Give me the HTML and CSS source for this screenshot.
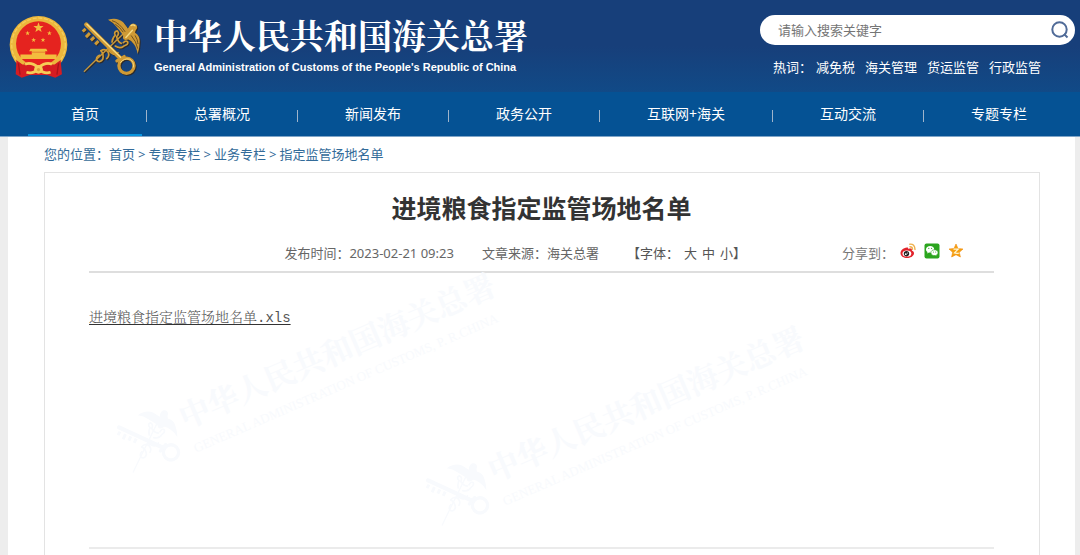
FILE: index.html
```html
<!DOCTYPE html>
<html lang="zh-CN">
<head>
<meta charset="utf-8">
<meta name="viewport" content="width=device-width, initial-scale=1">
<title>进境粮食指定监管场地名单</title>
<link rel="stylesheet" href="styles.css">
</head>
<body>
<svg class="defs" aria-hidden="true">
  <defs>
    <symbol id="keys" viewBox="240 50 182 182">
      <g fill="none" stroke="currentColor" stroke-linecap="round" stroke-linejoin="round">
        <path d="M250 215L290 176L386 84" stroke-width="4"/>
        <path d="M296 166q-12 6-8 16q10 8 18-4q4-16-6-26q14-8 22 4q6 12-4 20M324 150q12 20 28 8M344 138q14 10 26 0q14-4 12-12q-6-6-14 2M334 126q2-14 10-20q-6-12 6-14q8 8-2 18q4 16 14 20" stroke-width="5"/>
        <path d="M256 73L360 176" stroke-width="13"/>
        <path d="M254 86l-9 8M267 99l-12 12M280 111l-10 10M293 123l-10 10" stroke-width="9" stroke-linecap="butt"/>
        <ellipse cx="378" cy="198" rx="23" ry="23" stroke-width="10"/>
        <path d="M349 183l22-13" stroke-width="10"/>
      </g>
      <g fill="currentColor">
        <path d="M322 58q28-8 46 8q10 12 16 22q0-14 14-18q14 2 12 14q-6 8-6 14q16 10 14 28q0 18-6 36q-4-20-12-30q-8-12-16-14q-20 6-16-12q-8-12-20-26q-10-14-26-22z"/>
      </g>
      <g class="shine" fill="none" stroke-linecap="round">
        <path d="M258 72L360 172" stroke-width="4"/>
        <path d="M360 188q10-14 28-10q14 8 11 24" stroke-width="3"/>
        <path d="M392 76q6-5 12 1M376 112L396 90" stroke-width="4"/>
      </g>
      <path class="feather" d="M334 61q22 6 40 34M344 72q14 8 24 24M392 106q16 18 20 40M404 106q8 12 9 26" fill="none" stroke-width="3"/>
    </symbol>
    <symbol id="star" viewBox="-10 -10 20 20"><path d="M0-10L2.4-3.1 9.5-3.1 3.8 1.2 5.9 8.1 0 4 -5.9 8.1 -3.8 1.2 -9.5-3.1 -2.4-3.1z"/></symbol>
  </defs>
</svg>

<header class="site-header">
  <div class="brand-bar">
    <a class="brand" href="#">
      <svg class="emblem" viewBox="26 42 176 188" role="img" aria-label="国徽">
        <circle cx="114" cy="131" r="86" fill="#ecb73c"/>
        <circle cx="114" cy="131" r="80" fill="none" stroke="#f5cd5c" stroke-width="4" stroke-dasharray="12 5"/>
        <path d="M48 176l18 14h96l18-14 4 43-20 10-24-8H88l-24 8-18-10z" fill="#d51c22"/>
        <circle cx="114" cy="128" r="67" fill="#e5231f"/>
        <g fill="#f3bd3e">
          <use href="#star" x="98" y="64" width="32" height="32"/>
          <use href="#star" x="74" y="89" width="15" height="15"/><use href="#star" x="139" y="89" width="15" height="15"/>
          <use href="#star" x="92" y="109" width="15" height="15"/><use href="#star" x="120" y="109" width="15" height="15"/>
          <path d="M90 143h47l4 7h-7v10h34v13H60v-13h34v-10h-8z"/>
        </g>
        <path d="M92 153h44" stroke="#e2632a" stroke-width="2"/>
        <path d="M72 187q20-6 42 12q22-18 42 12M76 215q22 6 38-10q16 16 38 10" fill="none" stroke="#d51c22" stroke-width="3"/>
        <path d="M74 189q18-8 40 10q22-18 40-10M78 213q20 6 36-10q16 16 36 10" fill="none" stroke="#f6ce57" stroke-width="8"/>
        <circle cx="114" cy="204" r="13" fill="#f6ce57"/>
        <circle cx="114" cy="205" r="5" fill="#e0a23a"/>
        <path d="M54 186l5 34M174 186l-5 34" stroke="#a9131b" stroke-width="4"/>
      </svg>
      <svg class="keys" role="img" aria-label="关徽"><use href="#keys"/></svg>
      <span class="brand-text">
        <span class="brand-cn">中华人民共和国海关总署</span>
        <span class="brand-en">General Administration of Customs of the People's Republic of China</span>
      </span>
    </a>
    <div class="search-area">
      <form class="search">
        <input type="text" aria-label="搜索关键字" placeholder="请输入搜索关键字">
        <button type="button" aria-label="搜索">
          <svg viewBox="0 0 18 18"><circle cx="8.5" cy="8.5" r="7.2"/><path d="M13 13l3.5 3.5"/></svg>
        </button>
      </form>
      <div class="hot"><span class="hot-label">热词：</span><a href="#">减免税</a><a href="#">海关管理</a><a href="#">货运监管</a><a href="#">行政监管</a></div>
    </div>
  </div>
  <nav class="main-nav">
    <a class="active" href="#">首页</a><i></i><a href="#">总署概况</a><i></i><a href="#">新闻发布</a><i></i><a href="#">政务公开</a><i></i><a href="#">互联网+海关</a><i></i><a href="#">互动交流</a><i></i><a href="#">专题专栏</a>
  </nav>
</header>

<main class="page">
  <nav class="crumbs">
    <span class="crumb-label">您的位置：</span><a href="#">首页</a><span class="sep">&gt;</span><a href="#">专题专栏</a><span class="sep">&gt;</span><a href="#">业务专栏</a><span class="sep">&gt;</span><a href="#">指定监管场地名单</a>
  </nav>
  <article class="panel">
    <h1>进境粮食指定监管场地名单</h1>
    <div class="meta">
      <span>发布时间：2023-02-21 09:23</span>
      <span>文章来源：海关总署</span>
      <span class="sizes"><span>【字体：</span><button type="button">大</button><button type="button">中</button><button type="button">小</button><span class="close">】</span></span>
      <div class="share">
        <span class="share-label">分享到：</span>
        <a href="#" aria-label="微博"><svg viewBox="0 0 16 16">
          <path d="M7 4.500C3 5 .5 7.500 .5 10.300C.5 13 3.500 15 7 15s7-2 7-4.700c0-1.500-1-2.300-2.200-2.700c.6-1.800-.8-2.600-3.500-1.500C8.300 4.800 8 4.500 7 4.500z" fill="#e2232b"/>
          <ellipse cx="6.900" cy="10.600" rx="4.400" ry="3" fill="#fff"/><circle cx="6.500" cy="10.700" r="2.700" fill="#222"/><circle cx="5.800" cy="11.200" r=".9" fill="#fff"/><circle cx="7.500" cy="9.900" r=".5" fill="#fff"/>
          <path d="M9.800 1.200q5-.5 5.200 5.300M10 3.700q2.500 0 2.500 2.500" fill="none" stroke="#efb04c" stroke-width="1.400" stroke-linecap="round"/></svg></a>
        <a href="#" aria-label="微信"><svg viewBox="0 0 16 16">
          <rect x=".5" y=".5" width="15" height="15" rx="2" fill="#2ba51e"/>
          <path d="M6.200 3C3.800 3 2 4.500 2 6.400c0 1.100.6 2 1.500 2.600L3.200 10.500 5 9.600c2.800.5 5.200-.9 5.200-3.200C10.200 4.500 8.500 3 6.200 3z" fill="#fff"/>
          <path d="M10.500 6.800c-2 0-3.600 1.200-3.600 2.900 0 2 2.200 3.200 4.400 2.800l1.500.8-.3-1.300c.9-.6 1.500-1.400 1.500-2.300 0-1.700-1.500-2.900-3.500-2.900z" fill="#fff" stroke="#2ba51e" stroke-width=".6"/>
          <g fill="#2ba51e"><circle cx="4.800" cy="5.300" r=".6"/><circle cx="7.600" cy="5.300" r=".6"/><circle cx="9.400" cy="9" r=".5"/><circle cx="11.700" cy="9" r=".5"/></g></svg></a>
        <a href="#" aria-label="QQ空间"><svg viewBox="0 0 16 16">
          <path d="M8 1L10 5.500 15 6 11.300 9.300 12.400 14 8 11.700 3.600 14 4.700 9.300 1 6 6 5.500z" fill="#f6a112" stroke="#f08c0c" stroke-width=".6"/>
          <path d="M5.500 6.200h4.700L6.400 9.900q2.500.8 5 .1" fill="none" stroke="#fff8d8" stroke-width="1.200"/></svg></a>
      </div>
    </div>
    <div class="content">
      <svg class="watermark first" aria-hidden="true" viewBox="0 -20 440 250">
        <use href="#keys" x="3" y="133" width="60" height="60" transform="rotate(-20 33 163)"/>
        <g transform="rotate(-23.400 68 150)"><text class="wm-cn" x="67" y="152">中华人民共和国海关总署</text><text class="wm-en" x="68" y="178">GENERAL ADMINISTRATION OF CUSTOMS, P. R.CHINA</text></g>
      </svg>
      <svg class="watermark second" aria-hidden="true" viewBox="0 -20 440 250">
        <use href="#keys" x="3" y="133" width="60" height="60" transform="rotate(-20 33 163)"/>
        <g transform="rotate(-23.400 68 150)"><text class="wm-cn" x="67" y="152">中华人民共和国海关总署</text><text class="wm-en" x="68" y="178">GENERAL ADMINISTRATION OF CUSTOMS, P. R.CHINA</text></g>
      </svg>
      <a class="file" href="#">进境粮食指定监管场地名单.xls</a>
    </div>
  </article>
</main>
</body>
</html>
```

FILE: styles.css
```css
* { box-sizing: border-box; }
body {
  margin: 0;
  min-height: 100vh;
  display: flex;
  flex-direction: column;
  background: #ededed;
  color: #666;
  font: 13px/20px "Noto Sans", "Noto Sans CJK SC", sans-serif;
}
a { color: inherit; text-decoration: none; }
button { border: 0; padding: 0; background: none; color: inherit; font: inherit; cursor: pointer; }
.defs { position: absolute; width: 0; height: 0; }

.site-header { color: #fff; background: #055294; border-bottom: 1px solid #7fa5c8; }
.brand-bar {
  display: flex;
  justify-content: space-between;
  height: 92px;
  padding: 15px 5px 0 9px;
  background: linear-gradient(#173f7a 50%, #114a87);
}
.brand { display: flex; align-items: flex-start; }
.emblem { width: 59px; height: 63px; }
.keys { --shine: #f7dc83; --feather: #6f5120; width: 60px; height: 62px; margin: 1px 13px 0 13px; color: #cf9a35; filter: drop-shadow(1px 1px 0 #2c2a2c); }
.shine { stroke: var(--shine); }
.feather { stroke: var(--feather); }
.brand-text { display: flex; flex-direction: column; white-space: nowrap; }
.brand-cn { font: 700 34px/40px "Noto Serif CJK SC", "Noto Sans CJK SC", serif; }
.brand-en { font: 700 11px/24px "Liberation Sans", sans-serif; }

.search-area { width: 315px; }
.search { display: flex; align-items: center; height: 30px; padding: 0 6px 0 18px; border-radius: 16px; background: #fff; }
.search input { flex: 1; min-width: 0; padding: 0; border: 0; outline: 0; background: none; color: #666; font: inherit; }
.search input::placeholder { color: #757575; opacity: 1; }
.search button { display: flex; }
.search svg { width: 18px; height: 18px; fill: none; stroke: #506b98; stroke-width: 2; }
.hot { display: flex; gap: 10px; padding: 12px 0 0 13px; white-space: nowrap; }
.hot-label { margin-right: -6px; }

.main-nav { display: flex; align-items: stretch; height: 44px; padding-left: 28px; font-size: 14px; line-height: 44px; white-space: nowrap; }
.main-nav a { padding: 0 43px; }
.main-nav .active { box-shadow: inset 0 -2px #0795df; }
.main-nav i { width: 1px; height: 12px; margin: 18px 4px 0; background: #9fb4cb; }

.page { flex: 1; display: flex; flex-direction: column; margin: 0 5px 0 8px; padding: 0 35px 0 36px; background: #fff; }
.crumbs { display: flex; height: 35px; line-height: 35px; color: #336b99; white-space: nowrap; }
.sep { margin: 0 3px; }
.panel { flex: 1; display: flex; flex-direction: column; padding: 15px 45px 6px 44px; border: 1px solid #e3e3e3; border-bottom: 0; }
h1 { margin: 0; color: #333; font: 700 25px/38px "Noto Sans CJK SC", sans-serif; text-align: center; }
.meta { display: flex; justify-content: flex-end; align-items: center; gap: 28px; height: 47px; padding: 8px 30px 0 0; border-bottom: 2px solid #dedede; white-space: nowrap; }
.sizes { display: flex; color: #555; }
.sizes button { margin-left: 5px; }
.share { display: flex; align-items: flex-start; gap: 8px; margin-left: 68px; color: #777; }
.share-label { margin-right: -2px; }
.share a, .share svg { display: block; width: 16px; height: 16px; }
.content { position: relative; flex: 1; padding-top: 34px; border-bottom: 2px solid #ebebeb; }
.file { position: relative; color: #555; font: 300 14px/22px "Liberation Mono", "Noto Serif CJK SC", "Noto Sans CJK SC", monospace; text-decoration: underline; text-decoration-color: #333; text-underline-offset: 2px; }
.watermark { --shine: #f8fafd; --feather: #f8fafd; position: absolute; width: 440px; height: 250px; overflow: visible; color: #f8fafd; fill: #f8fafd; }
.watermark.first { left: 28px; top: -16px; }
.watermark.second { left: 337px; top: 37px; }
.wm-cn { font: 700 31px "Noto Serif CJK SC", "Noto Sans CJK SC", serif; }
.wm-en { font: 13px "Liberation Serif", serif; }
```
